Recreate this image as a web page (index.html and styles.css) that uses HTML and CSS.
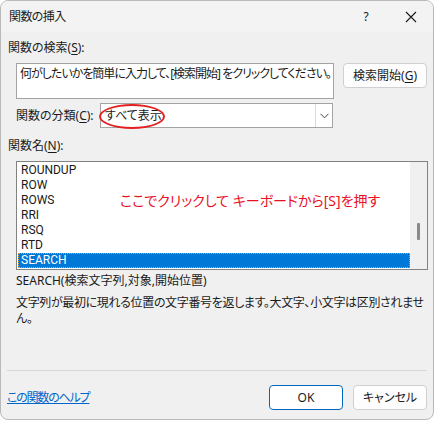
FILE: index.html
```html
<!DOCTYPE html>
<html lang="ja">
<head>
<meta charset="utf-8">
<link rel="stylesheet" href="styles.css">
</head>
<body>
<div class="dialog">
  <div class="titlebar">
    <span class="title">関数の挿入</span>
    <span class="help">?</span>
    <span class="close"><svg width="12" height="12" viewBox="0 0 12 12"><path d="M1 1 L11 11 M11 1 L1 11" stroke="#1a1a1a" stroke-width="1.1" fill="none"/></svg></span>
  </div>
  <div class="content">
    <div class="label">関数の検索(<u>S</u>):</div>
    <div class="search-row">
      <div class="searchbox">何がしたいかを簡単に入力して、[検索開始] をクリックしてください。</div>
      <div class="btn search-btn">検索開始(<u>G</u>)</div>
    </div>
    <div class="cat-row">
      <span class="cat-label">関数の分類(<u>C</u>):</span>
      <div class="select">
        <span class="select-value">すべて表示</span>
        <span class="drop"><svg width="9" height="6" viewBox="0 0 9 6"><path d="M0.5 0.8 L4.5 4.8 L8.5 0.8" stroke="#444" stroke-width="1" fill="none"/></svg></span>
        <span class="ellipse"></span>
      </div>
    </div>
    <div class="label name-label">関数名(<u>N</u>):</div>
    <div class="listbox">
      <ul class="items">
        <li>ROUNDUP</li>
        <li>ROW</li>
        <li>ROWS</li>
        <li>RRI</li>
        <li>RSQ</li>
        <li>RTD</li>
        <li class="selected">SEARCH</li>
      </ul>
      <div class="scrollbar"><span class="thumb"></span></div>
      <span class="note">ここでクリックして キーボードから[S]を押す</span>
    </div>
    <div class="syntax">SEARCH(検索文字列,対象,開始位置)</div>
    <div class="desc">文字列が最初に現れる位置の文字番号を返します。大文字、小文字は区別されませ<br>ん。</div>
  </div>
  <div class="footer">
    <div class="sep"></div>
    <div class="footer-row">
      <a class="helplink" href="#">この関数のヘルプ</a>
      <div class="buttons">
        <div class="btn ok">OK</div>
        <div class="btn cancel">キャンセル</div>
      </div>
    </div>
  </div>
</div>
</body>
</html>
```
FILE: styles.css
```css
* { box-sizing: border-box; }
html, body { margin: 0; padding: 0; background: #ffffff; }
body {
  font-family: "Noto Sans", "Noto Sans CJK JP", sans-serif;
  font-size: 12px;
  color: #1a1a1a;
  font-feature-settings: "palt";
}
u { text-decoration: underline; text-underline-offset: 2px; }
.dialog {
  width: 434px;
  height: 420px;
  border: 1px solid #b9b9b9;
  border-radius: 8px;
  background: #f0f0f0;
  overflow: hidden;
  display: flex;
  flex-direction: column;
}
.titlebar {
  height: 31px;
  flex: none;
  background: #f3f3f3;
  display: flex;
  align-items: center;
  padding-left: 8px;
}
.title { font-size: 12px; line-height: 16px; letter-spacing: -0.6px; }
.help { margin-left: auto; width: 12px; text-align: center; font-size: 12px; }
.close { width: 12px; height: 12px; margin-left: 33px; margin-right: 16px; display: flex; }
.content { padding: 8px 0 0 7px; flex: 1; }
.label { line-height: 16px; height: 16px; }
.search-row { display: flex; margin: 7px 0 0 8px; gap: 9px; align-items: flex-start; }
.searchbox {
  width: 318px;
  height: 36px;
  background: #fff;
  border: 1px solid #a3a3a3;
  padding: 2px 3px;
  line-height: 16px;
  white-space: nowrap;
  overflow: hidden;
  letter-spacing: -1px;
}
.btn {
  height: 25px;
  border: 1px solid #d0d0d0;
  border-radius: 4px;
  background: #fdfdfd;
  display: flex;
  align-items: center;
  justify-content: center;
  line-height: 16px;
}
.search-btn { width: 84px; }
.cat-row { display: flex; align-items: center; margin: 4px 0 0 8px; height: 25px; }
.cat-label { width: 84px; line-height: 16px; white-space: nowrap; }
.select {
  position: relative;
  width: 233px;
  height: 25px;
  background: #fff;
  border: 1px solid #a3a3a3;
  display: flex;
  align-items: center;
}
.select-value { padding-left: 4px; line-height: 16px; flex: 1; }
.drop {
  width: 17px;
  height: 23px;
  border-left: 1px solid #d9d9d9;
  display: flex;
  align-items: center;
  justify-content: center;
}
.ellipse {
  position: absolute;
  left: -2px;
  top: 0px;
  width: 66px;
  height: 25px;
  border: 2px solid #e3201f;
  border-radius: 50%;
}
.name-label { margin-top: 10px; }
.listbox {
  position: relative;
  margin: 7px 0 0 8px;
  width: 412px;
  height: 109px;
  background: #fff;
  border: 1px solid #828282;
  display: flex;
  padding: 1px 0 0 1px;
}
.items { list-style: none; margin: 0; padding: 0; width: 392px; font-family: Roboto, "Noto Sans", sans-serif; }
.items li { height: 15px; line-height: 15px; padding-left: 3px; }
.items li.selected {
  background: #0078d7;
  color: #fff;
  outline: 1px dotted #f0a030;
  outline-offset: -1px;
}
.scrollbar { width: 17px; background: #f0f0f0; position: relative; margin-top: -1px; height: 107px; }
.thumb { position: absolute; left: 7px; top: 61px; width: 3px; height: 17px; background: #8a8a8a; border-radius: 1px; }
.note {
  position: absolute;
  left: 103px;
  top: 30px;
  color: #e81123;
  font-size: 14px;
  line-height: 18px;
  white-space: nowrap;
}
.syntax { margin: 3px 0 0 8px; line-height: 16px; }
.desc { margin: 6px 0 0 8px; line-height: 16px; white-space: nowrap; letter-spacing: -0.35px; }
.footer { padding: 0 6px 9px 6px; flex: none; }
.sep { height: 1px; background: #d7d7d7; }
.footer-row { display: flex; align-items: center; margin-top: 14px; }
.helplink { color: #0066cc; text-decoration: underline; line-height: 16px; letter-spacing: -1.2px; }
.buttons { margin-left: auto; display: flex; gap: 10px; }
.ok { width: 74px; border-color: #0067c0; background: #fff; }
.cancel { width: 74px; }
```
